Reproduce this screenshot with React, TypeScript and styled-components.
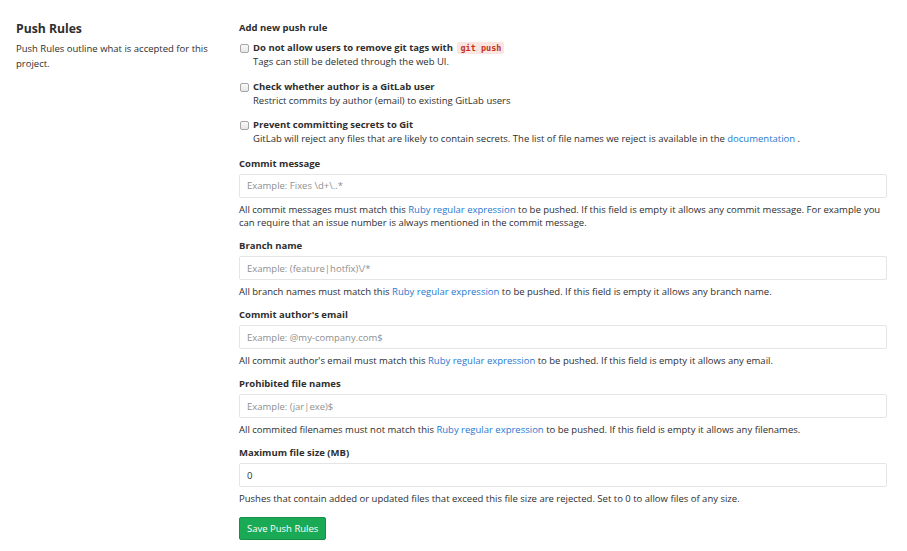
import React from "react";
import styled, { createGlobalStyle } from "styled-components";

const Global = createGlobalStyle`
  html, body { margin: 0; padding: 0; background: #fff; }
  body {
    font-family: "Open Sans", "Noto Sans", sans-serif;
    color: #2e2e2e;
    font-size: 9.5px;
  }
  * { box-sizing: border-box; }
`;

const Page = styled.div`
  display: grid;
  grid-template-columns: 239px 648px;
  padding-top: 20px;
`;

const Side = styled.div`
  padding-left: 16px;
  padding-right: 10px;
`;

const SideTitle = styled.h4`
  margin: 0 0 3px;
  font-size: 12.2px;
  font-weight: 700;
  line-height: 18px;
`;

const SideText = styled.p`
  margin: 0;
  font-size: 9.5px;
  line-height: 15px;
`;

const Main = styled.form`
  display: flex;
  flex-direction: column;
  padding-top: 1px;
`;

const Heading = styled.div`
  font-weight: 700;
  line-height: 14px;
  margin-bottom: 6px;
`;

const CheckGroup = styled.label`
  display: grid;
  grid-template-columns: 14px 1fr;
  margin-bottom: 11px;
`;

const Box = styled.span`
  width: 9px;
  height: 9px;
  margin-top: 3px;
  margin-left: 1px;
  border: 1px solid #a6a6a6;
  border-radius: 2px;
  background: linear-gradient(#fafafa, #e6e6e6);
`;

const CheckTitle = styled.div`
  font-weight: 700;
  line-height: 14px;
`;

const Help = styled.div`
  line-height: 13.5px;
`;

const Code = styled.code`
  font-family: "DejaVu Sans Mono", monospace;
  font-size: 8.5px;
  color: #c0341d;
  background: #fbe5e1;
  padding: 1px 3px;
  border-radius: 2px;
  margin-left: 2px;
  font-weight: 600;
`;

const Link = styled.a`
  color: #1f78d1;
  text-decoration: none;
`;

const Field = styled.div`
  display: flex;
  flex-direction: column;
  margin-bottom: 9.5px;
`;

const FieldLabel = styled.label`
  font-weight: 700;
  line-height: 14px;
  margin-bottom: 3px;
`;

const Input = styled.input`
  height: 24px;
  width: 648px;
  border: 1px solid #e5e5e5;
  border-radius: 2px;
  padding: 0 7px;
  font: inherit;
  color: #2e2e2e;
  margin-bottom: 5px;
  &::placeholder { color: #8f8f8f; }
`;

const SaveButton = styled.button`
  align-self: flex-start;
  margin-top: 1.5px;
  height: 23px;
  padding: 0 7px;
  background: #1aaa55;
  border: 1px solid #168f48;
  border-radius: 2px;
  color: #fff;
  font: inherit;
`;

const checks = [
  {
    title: (
      <>
        Do not allow users to remove git tags with <Code>git push</Code>
      </>
    ),
    help: <>Tags can still be deleted through the web UI.</>,
  },
  {
    title: <>Check whether author is a GitLab user</>,
    help: <>Restrict commits by author (email) to existing GitLab users</>,
  },
  {
    title: <>Prevent committing secrets to Git</>,
    help: (
      <>
        GitLab will reject any files that are likely to contain secrets. The list of file names we reject is
        available in the <Link href="#">documentation</Link> .
      </>
    ),
  },
];

const Ruby = () => <Link href="#">Ruby regular expression</Link>;

const fields = [
  {
    label: "Commit message",
    placeholder: "Example: Fixes \\d+\\..*",
    help: (
      <>
        All commit messages must match this <Ruby /> to be pushed. If this field is empty it allows any commit
        message. For example you can require that an issue number is always mentioned in the commit message.
      </>
    ),
  },
  {
    label: "Branch name",
    placeholder: "Example: (feature|hotfix)\\/*",
    help: (
      <>
        All branch names must match this <Ruby /> to be pushed. If this field is empty it allows any branch name.
      </>
    ),
  },
  {
    label: "Commit author's email",
    placeholder: "Example: @my-company.com$",
    help: (
      <>
        All commit author's email must match this <Ruby /> to be pushed. If this field is empty it allows any email.
      </>
    ),
  },
  {
    label: "Prohibited file names",
    placeholder: "Example: (jar|exe)$",
    help: (
      <>
        All commited filenames must not match this <Ruby /> to be pushed. If this field is empty it allows any
        filenames.
      </>
    ),
  },
];

export default function App() {
  return (
    <>
      <Global />
      <Page>
        <Side>
          <SideTitle>Push Rules</SideTitle>
          <SideText>Push Rules outline what is accepted for this project.</SideText>
        </Side>
        <Main onSubmit={(e) => e.preventDefault()}>
          <Heading>Add new push rule</Heading>
          {checks.map((c, i) => (
            <CheckGroup key={i}>
              <Box />
              <div>
                <CheckTitle>{c.title}</CheckTitle>
                <Help>{c.help}</Help>
              </div>
            </CheckGroup>
          ))}
          {fields.map((f) => (
            <Field key={f.label}>
              <FieldLabel>{f.label}</FieldLabel>
              <Input placeholder={f.placeholder} />
              <Help>{f.help}</Help>
            </Field>
          ))}
          <Field>
            <FieldLabel>Maximum file size (MB)</FieldLabel>
            <Input defaultValue="0" />
            <Help>Pushes that contain added or updated files that exceed this file size are rejected. Set to 0 to allow files of any size.</Help>
          </Field>
          <SaveButton type="submit">Save Push Rules</SaveButton>
        </Main>
      </Page>
    </>
  );
}
